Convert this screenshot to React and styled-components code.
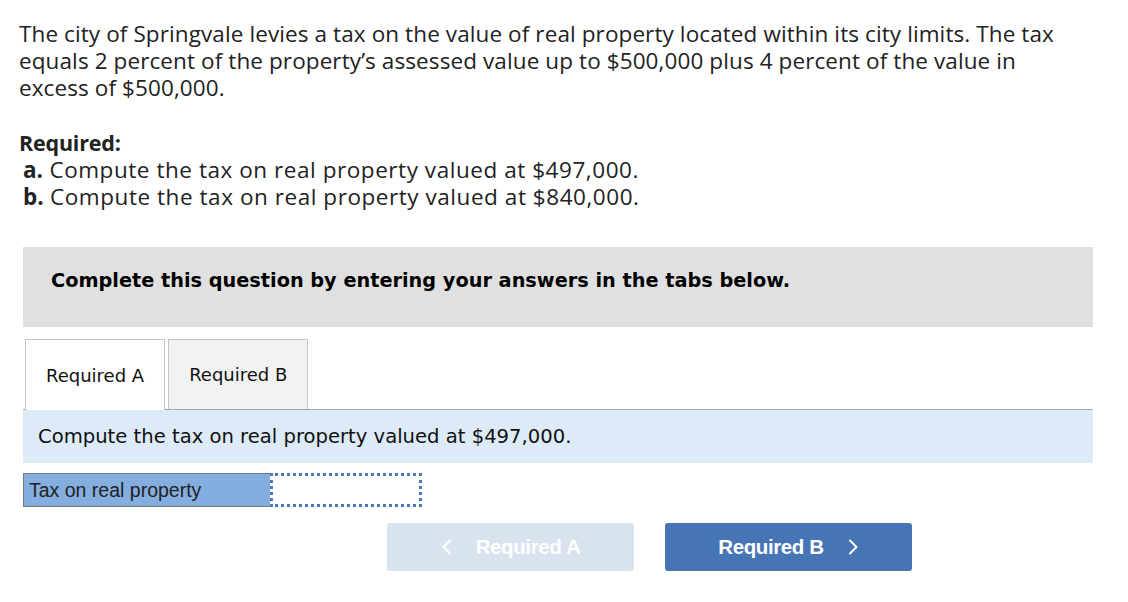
import styled, { createGlobalStyle } from "styled-components";

const GlobalStyle = createGlobalStyle`
	body {
		margin: 0;
		background: #ffffff;
		font-family: "Liberation Sans", Arial, sans-serif;
		color: #222222;
	}
`;

function ChevronIcon({ dir }) {
	return (
		<svg width="11" height="16" viewBox="0 0 11 16" fill="none">
			<polyline
				points={dir === "left" ? "9,1.5 2.5,8 9,14.5" : "2,1.5 8.5,8 2,14.5"}
				stroke="currentColor"
				strokeWidth="2"
				strokeLinecap="round"
				strokeLinejoin="round"
			/>
		</svg>
	);
}

export default function App() {
	return (
		<Page>
			<GlobalStyle />
			<Intro>
				The city of Springvale levies a tax on the value of real property located within its city limits. The tax equals 2 percent of the
				property’s assessed value up to $500,000 plus 4 percent of the value in excess of $500,000.
			</Intro>
			<Required>
				<h3>Required:</h3>
				<p>
					<b>a.</b> Compute the tax on real property valued at $497,000.
				</p>
				<p>
					<b>b.</b> Compute the tax on real property valued at $840,000.
				</p>
			</Required>
			<Notice>Complete this question by entering your answers in the tabs below.</Notice>
			<Tabs>
				<Tab active>Required A</Tab>
				<Tab>Required B</Tab>
			</Tabs>
			<Prompt>Compute the tax on real property valued at $497,000.</Prompt>
			<AnswerRow>
				<Label>Tax on real property</Label>
				<Input type="text" />
			</AnswerRow>
			<NavRow>
				<NavButton disabled>
					<ChevronIcon dir="left" />
					<span>Required A</span>
				</NavButton>
				<NavButton primary>
					<span>Required B</span>
					<ChevronIcon dir="right" />
				</NavButton>
			</NavRow>
		</Page>
	);
}

const Page = styled.div`
	width: 1128px;
	padding: 20px 35px 0 19px;
	box-sizing: border-box;
`;

const Intro = styled.p`
	margin: 0;
	max-width: 1040px;
	font-family: "Open Sans", sans-serif;
	font-size: 22.5px;
	line-height: 27px;
	letter-spacing: 0.1px;
	color: #222222;
`;

const Required = styled.div`
	margin-top: 28px;
	font-family: "Open Sans", sans-serif;
	font-size: 22.5px;
	line-height: 27px;
	letter-spacing: 0.55px;
	color: #222222;
	h3 {
		margin: 0;
		font-size: 21.5px;
		font-weight: 700;
		letter-spacing: -0.2px;
	}
	p {
		margin: 0 0 0 4px;
	}
	b {
		font-weight: 700;
		letter-spacing: 0;
	}
`;

const Notice = styled.div`
	margin: 37px 0 0 4px;
	height: 80px;
	box-sizing: border-box;
	padding: 21px 28px 0;
	background: #e0e0e0;
	font-family: Verdana, "DejaVu Sans", sans-serif;
	font-weight: bold;
	font-size: 19.3px;
	line-height: 26px;
	color: #000000;
`;

const Tabs = styled.div`
	margin: 12px 0 0 4px;
	display: flex;
	gap: 3px;
	padding-left: 2px;
	border-bottom: 1px solid #a8a8a8;
`;

const Tab = styled.div`
	box-sizing: border-box;
	padding: 0 20px;
	display: flex;
	align-items: center;
	border: 1px solid #c4c4c4;
	border-bottom: none;
	margin-bottom: ${(p) => (p.active ? "-1px" : "0")};
	height: ${(p) => (p.active ? "71px" : "70px")};
	background: ${(p) => (p.active ? "#ffffff" : "#f2f2f2")};
	font-family: Verdana, "DejaVu Sans", sans-serif;
	font-size: 18px;
	color: #111111;
`;

const Prompt = styled.div`
	margin-left: 4px;
	height: 53px;
	box-sizing: border-box;
	padding: 0 15px;
	display: flex;
	align-items: center;
	background: #ddeaf7;
	font-family: Verdana, "DejaVu Sans", sans-serif;
	font-size: 19.6px;
	color: #111111;
`;

const AnswerRow = styled.div`
	margin: 10px 0 0 4px;
	display: flex;
	height: 34px;
`;

const Label = styled.div`
	width: 247px;
	box-sizing: border-box;
	border: 1px solid #777777;
	border-right: none;
	background: #84aee0;
	padding: 0 5px;
	display: flex;
	align-items: center;
	font-size: 19.5px;
	color: #222222;
`;

const Input = styled.input`
	width: 152px;
	height: 34px;
	box-sizing: border-box;
	border: 3px dotted #4a79bd;
	background: #ffffff;
	outline: none;
`;

const NavRow = styled.div`
	margin-top: 16px;
	display: flex;
	gap: 31px;
	padding-left: 368px;
`;

const NavButton = styled.button`
	width: 247px;
	height: 48px;
	border: none;
	border-radius: 3px;
	display: flex;
	align-items: center;
	justify-content: center;
	gap: 24px;
	background: ${(p) => (p.primary ? "#4774b4" : "#d9e3ef")};
	color: #ffffff;
	font-family: "Liberation Sans", Arial, sans-serif;
	font-weight: bold;
	font-size: 20.5px;
	letter-spacing: -0.4px;
	cursor: ${(p) => (p.disabled ? "default" : "pointer")};
`;
